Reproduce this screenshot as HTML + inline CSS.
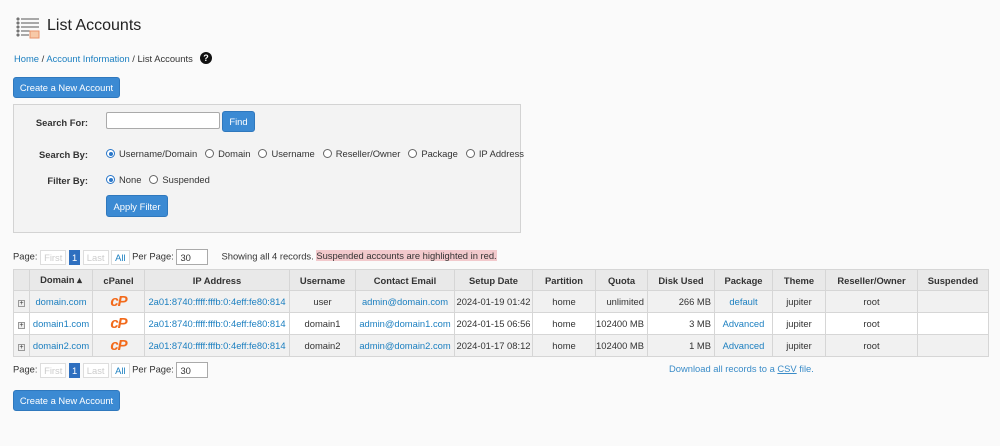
<!DOCTYPE html>
<html><head><meta charset="utf-8"><style>
*{box-sizing:border-box;margin:0;padding:0}
body{width:1000px;height:446px;background:#fafafa;font-family:"Liberation Sans",sans-serif;font-size:9.4px;color:#333;position:relative;overflow:hidden}
.a{position:absolute;white-space:nowrap}
a{color:#1b7fc0;text-decoration:none}
.btn{position:absolute;background:#3b8ad3;border:1px solid #2f78bd;border-radius:3px;color:#fff;font-size:9.4px;display:flex;align-items:center;justify-content:center}
.box{position:absolute;left:13px;top:104px;width:508px;height:129px;background:#f3f3f3;border:1px solid #d3d3d3}
.lbl{position:absolute;font-weight:bold;text-align:right;width:74px}
.r{display:inline-block;width:9px;height:9px;border:1px solid #666;border-radius:50%;vertical-align:-1px;margin-right:4px;position:relative;background:#fff}
.r.on{border-color:#2a77c9}
.r.on:after{content:"";position:absolute;left:1.5px;top:1.5px;width:4px;height:4px;border-radius:50%;background:#2a77c9}
.rg span.o{margin-right:8px}
table{position:absolute;left:13px;top:269px;border-collapse:collapse;table-layout:fixed;width:975px}
td,th{border:1px solid #d6d6d6;height:22px;text-align:center;font-size:9.4px;white-space:nowrap;overflow:hidden;padding:0}
th{background:#e9e9e9;height:21px}
tr.g td{background:#f1f1f1}
tr.w td{background:#fff}
.pg{position:absolute;font-size:9.4px}
.pb{display:inline-block;border:1px solid #ddd;background:#fff;color:#ccc;padding:1px 3px;height:15px;vertical-align:middle}
.pb.cur{background:#2e6fbf;color:#fff;border-color:#2e6fbf;padding:1px 2px}
.pb.all{color:#1b7fc0}
.inp{display:inline-block;border:1px solid #aaa;background:#fff;width:32px;height:16px;vertical-align:middle;padding:2px 3px}
.cp{color:#f26a1b;font-weight:bold;font-size:15px;font-style:italic;letter-spacing:-1px}
.pl{display:inline-block;width:7px;height:7px;border:1px solid #999;background:#eee;font-size:7px;line-height:5px;color:#333}
</style></head><body>
<svg class="a" style="left:16px;top:17px" width="26" height="22" viewBox="0 0 26 22"><g fill="none" stroke="#555" stroke-width="1"><circle cx="2" cy="2" r="1"/><circle cx="2" cy="6" r="1"/><circle cx="2" cy="10" r="1"/><circle cx="2" cy="14" r="1"/><circle cx="2" cy="18" r="1"/><path d="M5 2h18M5 6h18M5 10h18M5 14h10M5 18h8"/></g><rect x="14" y="14" width="9" height="7" fill="#f7c9a8" stroke="#e8926a"/></svg>
<div class="a" style="left:47px;top:17px;font-size:16px;color:#222">List Accounts</div>
<div class="a" style="left:14px;top:53px"><a>Home</a> / <a>Account Information</a> / List Accounts</div>
<div class="a" style="left:200px;top:52px;width:12px;height:12px;border-radius:50%;background:#111;color:#fff;font-weight:bold;font-size:9px;text-align:center;line-height:12px">?</div>
<div class="btn" style="left:13px;top:77px;width:107px;height:21px">Create a New Account</div>
<div class="box">
<div class="lbl" style="left:0;top:12px">Search For:</div>
<div class="a" style="left:92px;top:7px;width:114px;height:17px;border:1px solid #aaa;background:#fff;border-radius:2px"></div>
<div class="btn" style="left:208px;top:6px;width:33px;height:21px">Find</div>
<div class="lbl" style="left:0;top:44px">Search By:</div>
<div class="a rg" style="left:92px;top:43px"><span class="r on"></span><span class="o">Username/Domain</span><span class="r"></span><span class="o">Domain</span><span class="r"></span><span class="o">Username</span><span class="r"></span><span class="o">Reseller/Owner</span><span class="r"></span><span class="o">Package</span><span class="r"></span><span>IP Address</span></div>
<div class="lbl" style="left:0;top:70px">Filter By:</div>
<div class="a rg" style="left:92px;top:69px"><span class="r on"></span><span class="o">None</span><span class="r"></span><span>Suspended</span></div>
<div class="btn" style="left:92px;top:90px;width:62px;height:22px">Apply Filter</div>
</div>
<div class="pg" style="left:13px;top:249px">Page: <span class="pb">First</span> <span class="pb cur">1</span> <span class="pb">Last</span> <span class="pb all">All</span> Per Page: <span class="inp">30</span> &nbsp;&nbsp;&nbsp; Showing all 4 records. <span style="background:#f2c9cc">Suspended accounts are highlighted in red.</span></div>
<table>
<colgroup><col style="width:16px"><col style="width:63px"><col style="width:52px"><col style="width:145px"><col style="width:66px"><col style="width:99px"><col style="width:78px"><col style="width:63px"><col style="width:52px"><col style="width:67px"><col style="width:58px"><col style="width:53px"><col style="width:92px"><col style="width:71px"></colgroup>
<tr><th></th><th>Domain ▴</th><th>cPanel</th><th>IP Address</th><th>Username</th><th>Contact Email</th><th>Setup Date</th><th>Partition</th><th>Quota</th><th>Disk Used</th><th>Package</th><th>Theme</th><th>Reseller/Owner</th><th>Suspended</th></tr>
<tr class="g"><td><span class="pl">+</span></td><td><a>domain.com</a></td><td><span class="cp">cP</span></td><td><a>2a01:8740:ffff:fffb:0:4eff:fe80:814</a></td><td>user</td><td><a>admin@domain.com</a></td><td>2024-01-19 01:42</td><td>home</td><td style="text-align:right;padding-right:3px">unlimited</td><td style="text-align:right;padding-right:3px">266 MB</td><td><a>default</a></td><td>jupiter</td><td>root</td><td></td></tr>
<tr class="w"><td><span class="pl">+</span></td><td><a>domain1.com</a></td><td><span class="cp">cP</span></td><td><a>2a01:8740:ffff:fffb:0:4eff:fe80:814</a></td><td>domain1</td><td><a>admin@domain1.com</a></td><td>2024-01-15 06:56</td><td>home</td><td style="text-align:right;padding-right:3px">102400 MB</td><td style="text-align:right;padding-right:3px">3 MB</td><td><a>Advanced</a></td><td>jupiter</td><td>root</td><td></td></tr>
<tr class="g"><td><span class="pl">+</span></td><td><a>domain2.com</a></td><td><span class="cp">cP</span></td><td><a>2a01:8740:ffff:fffb:0:4eff:fe80:814</a></td><td>domain2</td><td><a>admin@domain2.com</a></td><td>2024-01-17 08:12</td><td>home</td><td style="text-align:right;padding-right:3px">102400 MB</td><td style="text-align:right;padding-right:3px">1 MB</td><td><a>Advanced</a></td><td>jupiter</td><td>root</td><td></td></tr>
</table>
<div class="pg" style="left:13px;top:362px">Page: <span class="pb">First</span> <span class="pb cur">1</span> <span class="pb">Last</span> <span class="pb all">All</span> Per Page: <span class="inp">30</span></div>
<div class="a" style="left:669px;top:363px;color:#3a8cc8">Download all records to a <u>CSV</u> file.</div>
<div class="btn" style="left:13px;top:390px;width:107px;height:21px">Create a New Account</div>
</body></html>
